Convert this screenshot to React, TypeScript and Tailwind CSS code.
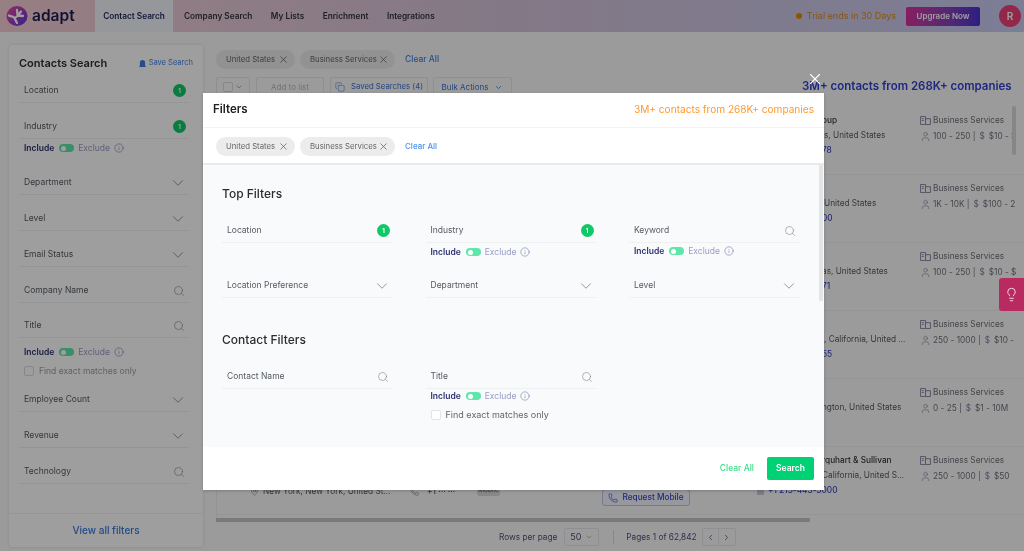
import { ChevronDown, ChevronLeft, ChevronRight, Copy, Info, Lightbulb, MapPin, Phone, Search, User, X } from 'lucide-react';
import type { ReactNode } from 'react';

const tabs = ['Company Search', 'My Lists', 'Enrichment', 'Integrations'];

const results = [
  { place: 'oup', placeClass: 'pl-[65px]', loc: 'is, United States', locClass: 'pl-[65px]', phone: '78', size: '100 - 250', rev: '$10 - $' },
  { place: '', placeClass: '', loc: 'United States', locClass: 'pl-[67px]', phone: '00', size: '1K - 10K', rev: '$100 - 2' },
  { place: '', placeClass: '', loc: 'as, United States', locClass: 'pl-[65px]', phone: '71', size: '100 - 250', rev: '$10 - $' },
  { place: '', placeClass: '', loc: ', California, United ...', locClass: 'pl-[67px]', phone: '55', size: '250 - 1000', rev: '$10 -' },
  { place: '', placeClass: '', loc: 'ngton, United States', locClass: 'pl-[65px]', phone: '', size: '0 - 25', rev: '$1 - 10M' },
  { place: 'rquhart & Sullivan', placeClass: 'pl-[65px]', loc: 'California, United S...', locClass: 'pl-[65px]', phone: '', size: '250 - 1000', rev: '$50' },
];

function Badge() {
  return (
    <span className="-mr-[2px] flex h-[13px] w-[13px] items-center justify-center rounded-full bg-[#0fc968] text-[6px] font-bold text-white">1</span>
  );
}

function Row({ label, right, className = '' }: { label: string; right?: ReactNode; className?: string }) {
  return (
    <div className={`flex h-6 items-center justify-between border-b border-[#eef0f2] pl-[5px] pr-[5px] text-[8.5px] text-[#555a60] ${className}`}>
      <span>{label}</span>
      {right}
    </div>
  );
}

const Chevron = () => <ChevronDown className="-mr-[3px] h-[18px] w-[18px] text-[#777]" strokeWidth={1} />;
const Find = () => <Search className="-mr-[1px] h-3 w-3 text-[#888]" strokeWidth={1.25} />;

function Toggle({ className = '' }: { className?: string }) {
  return (
    <div className={`flex h-4 items-center pl-[5px] text-[8.5px] ${className}`}>
      <span className="font-semibold text-[#2d3270]">Include</span>
      <span className="ml-[5px] flex h-2 w-[15px] items-center rounded-full bg-[#5fe6ab] pl-[2px]">
        <span className="h-[5px] w-[5px] rounded-full bg-white" />
      </span>
      <span className="ml-1 text-[#9a9dc2]">Exclude</span>
      <Info className="ml-1 h-[10px] w-[10px] text-[#7d80ab]" strokeWidth={1.5} />
    </div>
  );
}

function Chip({ label, className = '' }: { label: string; className?: string }) {
  return (
    <span className={`flex h-[19px] items-center justify-between whitespace-nowrap rounded-full bg-[#ececec] pl-[10px] pr-[6px] text-[7.75px] text-[#666] ${className}`}>
      {label}
      <X className="h-[11px] w-[11px] text-[#555]" strokeWidth={1.5} />
    </span>
  );
}

function BusinessIcon() {
  return (
    <svg viewBox="0 0 12 10" className="h-[9px] w-[11px] text-[#7b7d9c]" fill="none" stroke="currentColor" strokeWidth="1">
      <path d="M.5 9.5V.5h5.500v9zM6 3h5.500v6.500H6M2 3h2M2 5h2" />
    </svg>
  );
}

function Logo() {
  return (
    <svg viewBox="0 0 22 20" className="h-5 w-[22px]">
      <defs>
        <linearGradient id="lg" x1="0" y1="0" x2="1" y2="1">
          <stop offset="0" stopColor="#f0489c" />
          <stop offset="1" stopColor="#5a34e0" />
        </linearGradient>
      </defs>
      <ellipse cx="11" cy="10" rx="10.500" ry="10" fill="url(#lg)" />
      <path d="M3 9.500c2.500 1.500 4 .5 5.500 2.500 1.500-.5 3-1.500 3.500-3l3-3.500M11.500 9l-.5-5M12 9.500l5 .5M8.500 12l2.500 5" fill="none" stroke="#fff" strokeWidth="2.300" strokeLinecap="round" strokeLinejoin="round" />
    </svg>
  );
}

function Sidebar() {
  return (
    <aside className="ml-[9px] flex h-[502px] w-[194px] shrink-0 flex-col rounded-[3px] bg-white pl-[10px] pr-[14px] pt-[10px] shadow-[0_0_4px_rgba(0,0,0,0.12)]">
      <div className="-mr-1 flex h-4 items-center justify-between">
        <h2 className="text-[11px] font-semibold text-[#2c2e33]">Contacts Search</h2>
        <span className="flex items-center gap-[3px] text-[7.5px] text-[#3f7fe0]">
          <svg viewBox="0 0 8 8" className="h-[7px] w-[7px]" fill="currentColor"><path d="M1 7V3a3 3 0 0 1 6 0v4zM0 7h8v1H0z" /></svg>
          Save Search
        </span>
      </div>
      <Row label="Location" right={<Badge />} className="mt-2" />
      <Row label="Industry" right={<Badge />} className="mt-3" />
      <Toggle className="mt-[1px]" />
      <Row label="Department" right={<Chevron />} className="mt-[15px]" />
      <Row label="Level" right={<Chevron />} className="mt-3" />
      <Row label="Email Status" right={<Chevron />} className="mt-3" />
      <Row label="Company Name" right={<Find />} className="mt-3" />
      <Row label="Title" right={<Find />} className="mt-[11px]" />
      <Toggle className="mt-[6px]" />
      <div className="mt-[3px] flex h-4 items-center pl-[5px] text-[8.5px] text-[#9a9da2]">
        <span className="mr-[5px] h-[10px] w-[10px] rounded-[2px] border border-[#d8dade]" />
        Find exact matches only
      </div>
      <Row label="Employee Count" right={<Chevron />} className="mt-[9px]" />
      <Row label="Revenue" right={<Chevron />} className="mt-3" />
      <Row label="Technology" right={<Find />} className="mt-3" />
      <div className="-ml-[10px] -mr-[14px] mt-auto flex h-[34px] items-center justify-center border-t border-[#eef0f2] text-[10px] font-medium text-[#3c78d8]">
        View all filters
      </div>
    </aside>
  );
}

function Results() {
  return (
    <div className="relative mt-[10px] h-[411px] overflow-hidden border-l border-[#eceef0]">
      {results.map((r, i) => (
        <div key={i} className="flex h-[68px] border-b border-[#f0f1f3] pt-[6px] text-[8.25px] leading-[15px] text-[#555a60]">
          <div className="w-[540px] shrink-0">
            {i === 5 && (
              <div className="mt-[31px] flex items-start whitespace-nowrap">
                <MapPin className="ml-[33px] mt-[3px] h-[9px] w-[9px] text-[#777]" strokeWidth={1.5} />
                <span className="ml-[4px] w-[133px]">New York, New York, United St...</span>
                <Phone className="ml-[14px] mt-[3px] h-[9px] w-[9px] text-[#777]" strokeWidth={1.5} />
                <span className="ml-[8px] w-[46px] font-medium">+1 ··· ···</span>
                <span className="ml-[4px] flex h-[12px] w-[23px] items-center justify-center rounded-[2px] bg-[#dcdcdc] text-[6.5px] leading-none">Mobile</span>
                <span className="ml-[102px] mt-[5px] flex h-[17px] w-[88px] items-center justify-center gap-[4px] rounded-[3px] border border-[#bcc3f2] bg-[#f3f5ff] font-medium text-[#3b45c4]">
                  <Phone className="h-[10px] w-[10px]" strokeWidth={1.5} />
                  Request Mobile
                </span>
              </div>
            )}
          </div>
          <div className="w-[148px] shrink-0 whitespace-nowrap">
            <div className={`h-[15px] font-medium text-[#33353a] ${r.placeClass}`}>{r.place}</div>
            <div className={r.locClass}>{r.loc}</div>
            {i === 5 ? (
              <div className="flex items-center gap-1 font-medium text-[#3b45c4]">
                <span className="h-[8px] w-[7px] bg-[#c9c9d6]" />
                +1 213-443-3000
              </div>
            ) : (
              <div className="pl-[65px] font-medium text-[#3b45c4]">{r.phone}</div>
            )}
          </div>
          <div className="ml-[15px] whitespace-nowrap text-[#6d7078]">
            <div className="flex h-[15px] items-center gap-[2px]">
              <BusinessIcon />
              Business Services
            </div>
            <div className="flex h-[17px] items-center gap-[2px]">
              <User className="h-[11px] w-[11px] text-[#7b7d9c]" strokeWidth={1.25} />
              {r.size} | <span className="mx-[2px] text-[#7b7d9c]">$</span> {r.rev}
            </div>
          </div>
        </div>
      ))}
    </div>
  );
}

function Main() {
  return (
    <main className="ml-[13px] min-w-0 flex-1">
      <div className="mt-[5px] flex items-center">
        <Chip label="United States" className="w-[79px]" />
        <Chip label="Business Services" className="ml-[5px] w-[95px]" />
        <span className="ml-[10px] text-[8.5px] font-medium text-[#3f7fe0]">Clear All</span>
      </div>
      <div className="mt-[8px] flex items-start text-[8px]">
        <div className="flex h-5 w-[34px] items-center justify-center gap-[2px] rounded-[2px] border border-[#e5e7ea]">
          <span className="h-[10px] w-[10px] rounded-[2px] border border-[#d8dade]" />
          <ChevronDown className="h-[8px] w-[8px] text-[#888]" />
        </div>
        <div className="ml-[6px] flex h-5 w-[68px] items-center justify-center rounded-[2px] border border-[#e5e7ea] text-[#b5b7ba]">Add to list</div>
        <div className="ml-[6px] flex h-5 w-[98px] items-center justify-center gap-[6px] rounded-[2px] border border-[#e5e7ea] text-[7.75px] text-[#3b6fd1]">
          <Copy className="h-[10px] w-[10px]" strokeWidth={1.25} />
          Saved Searches (4)
        </div>
        <div className="ml-[5px] flex h-5 w-[79px] items-center justify-center gap-[6px] rounded-[2px] border border-[#e5e7ea] text-[#3b6fd1]">
          Bulk Actions
          <ChevronDown className="h-[9px] w-[9px]" />
        </div>
        <h3 className="ml-[290px] mt-[1px] whitespace-nowrap text-[11.5px] font-semibold text-[#2f3fd0]">3M+ contacts from 268K+ companies</h3>
      </div>
      <Results />
      <div className="h-1 w-[594px] bg-[#c4c6c9]" />
      <div className="ml-[283px] mt-[6px] flex h-[18px] items-center text-[8.25px] text-[#4b4f7a]">
        <span>Rows per page</span>
        <span className="ml-[7px] flex h-[18px] w-[35px] items-center justify-center gap-1 rounded-[2px] border border-[#e5e7ea] text-[9px]">
          50
          <ChevronDown className="h-[8px] w-[8px] text-[#999]" />
        </span>
        <span className="ml-[14px] h-[14px] border-l border-[#dcdee2]" />
        <span className="ml-[12px]">Pages 1 of 62,842</span>
        <span className="ml-[5px] flex h-[18px] w-[34px] items-center rounded-[2px] border border-[#e5e7ea]">
          <span className="flex h-full flex-1 items-center justify-center border-r border-[#e5e7ea]"><ChevronLeft className="h-[9px] w-[9px]" /></span>
          <span className="flex h-full flex-1 items-center justify-center"><ChevronRight className="h-[9px] w-[9px]" /></span>
        </span>
      </div>
    </main>
  );
}

function FiltersModal() {
  return (
    <div className="absolute left-[203px] top-[93px] flex h-[397px] w-[621px] flex-col bg-white shadow-[0_1px_3px_rgba(0,0,0,0.2)]">
      <X className="absolute -top-[23px] right-0 h-[18px] w-[18px] text-white" strokeWidth={1.5} />
      <div className="flex h-[34px] shrink-0 items-center justify-between px-[10px]">
        <h2 className="text-[11.5px] font-semibold text-[#222]">Filters</h2>
        <span className="text-[10.1px] text-[#ff9a2e]">3M+ contacts from 268K+ companies</span>
      </div>
      <div className="flex h-[38px] shrink-0 items-center border-b-2 border-t border-b-[#e9eaec] border-t-[#f2f3f4] pl-[13px] pt-[2px]">
        <Chip label="United States" className="w-[79px]" />
        <Chip label="Business Services" className="ml-[5px] w-[95px]" />
        <span className="-mt-[2px] ml-[10px] text-[8px] font-medium text-[#4a90f0]">Clear All</span>
      </div>
      <div className="relative flex-1 bg-[#f9fafc] pl-[19px] pt-[21px]">
        <div className="absolute right-[1px] top-0 h-[136px] w-[4px] bg-[#e3e4e6]" />
        <h3 className="text-[12px] font-medium leading-4 text-[#2b2d31]">Top Filters</h3>
        <div className="mt-[17px] grid w-[578px] grid-cols-[171px_171px_171px] grid-rows-[55px_24px] gap-x-[32.5px]">
          <div><Row label="Location" right={<Badge />} className="border-[#edeff2]" /></div>
          <div><Row label="Industry" right={<Badge />} className="border-[#edeff2]" /><Toggle className="mt-[1px]" /></div>
          <div><Row label="Keyword" right={<Find />} className="border-[#edeff2]" /><Toggle /></div>
          <Row label="Location Preference" right={<Chevron />} className="border-[#edeff2]" />
          <Row label="Department" right={<Chevron />} className="border-[#edeff2]" />
          <Row label="Level" right={<Chevron />} className="border-[#edeff2]" />
        </div>
        <h3 className="mt-[34px] text-[12px] font-medium leading-4 text-[#2b2d31]">Contact Filters</h3>
        <div className="mt-[17px] grid w-[578px] grid-cols-[171px_171px] gap-x-[32.5px]">
          <Row label="Contact Name" right={<Find />} className="border-[#edeff2]" />
          <div>
            <Row label="Title" right={<Find />} className="border-[#edeff2]" />
            <Toggle className="-mt-[1px]" />
            <div className="mt-[3px] flex h-4 items-center pl-[5px] text-[9px] text-[#666]">
              <span className="mr-[5px] h-[10px] w-[10px] rounded-[2px] border border-[#e2e4e8] bg-white" />
              Find exact matches only
            </div>
          </div>
        </div>
      </div>
      <div className="flex h-[43px] shrink-0 items-center justify-end pr-[10px]">
        <span className="text-[8.5px] font-medium text-[#3ddc8c]">Clear All</span>
        <span className="ml-[13px] flex h-[23px] w-[47px] items-center justify-center rounded-[2px] bg-[#00d175] text-[8.5px] font-semibold text-white">Search</span>
      </div>
    </div>
  );
}

export default function App() {
  return (
    <div className="relative h-[551px] w-[1024px] overflow-hidden bg-[#fbfbfc] font-['Inter',sans-serif] blur-[0.35px]">
      <header className="flex h-8 items-stretch bg-gradient-to-r from-[#f4cdd4] via-[#d4c3d9] to-[#c8cbf2]">
        <div className="flex w-[95px] items-center pl-[6px]">
          <Logo />
          <span className="ml-[4px] text-[15.5px] font-semibold text-[#1d1d4d]">adapt</span>
        </div>
        <div className="flex w-[78px] items-center justify-center bg-[#f1f4f8] text-[8.25px] font-semibold text-[#24295f]">Contact Search</div>
        <nav className="ml-[11px] flex items-center gap-[18.5px] text-[8.25px] font-semibold text-[#33353f]">
          {tabs.map(t => <span key={t}>{t}</span>)}
        </nav>
        <div className="ml-auto flex items-center pr-[3px]">
          <span className="h-[6px] w-[6px] rounded-full bg-[#e88a00]" />
          <span className="ml-[5px] text-[9px] text-[#d98a20]">Trial ends in 30 Days</span>
          <span className="ml-[10px] flex h-[19px] w-[74px] items-center justify-center rounded-[2px] bg-gradient-to-r from-[#d92f9a] to-[#4a30d0] text-[8px] font-semibold text-white">Upgrade Now</span>
          <span className="ml-[19px] flex h-[22px] w-[22px] items-center justify-center rounded-full bg-[#ee3f78] text-[10px] font-semibold text-white">R</span>
        </div>
      </header>
      <div className="mt-[13px] flex">
        <Sidebar />
        <Main />
      </div>
      <div className="absolute right-[8px] top-[106px] h-[49px] w-[4px] rounded bg-[#d8d9db]" />
      <div className="absolute inset-0 bg-black/[0.38]" />
      <div className="absolute right-0 top-[278px] flex h-[33px] w-[25px] items-center justify-center rounded-l-[3px] bg-[#b82a60]">
        <Lightbulb className="h-[15px] w-[15px] text-white" strokeWidth={1.25} />
      </div>
      <FiltersModal />
    </div>
  );
}
